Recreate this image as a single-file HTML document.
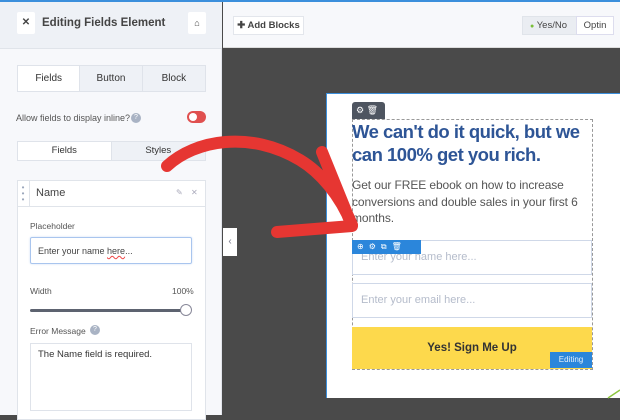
<!DOCTYPE html>
<html><head><meta charset="utf-8"><style>
*{box-sizing:border-box;margin:0;padding:0}
body{width:620px;height:415px;overflow:hidden;font-family:"Liberation Sans",sans-serif;background:#4a4a4a;position:relative}
.a{position:absolute}
.left{left:0;top:0;width:222px;height:415px;background:#f7f8fb;border-right:1px solid #e2e5ec}
.t{font-size:10px;color:#333}
</style></head><body>
<div class="a" style="left:0;top:0;width:620px;height:2px;background:#3b8fdc;z-index:5"></div>
<div class="a left">
 <div class="a" style="left:0;top:2px;width:222px;height:47px;background:#eef1f6;border-bottom:1px solid #e0e4ea"></div>
 <div class="a" style="left:17px;top:12px;width:18px;height:22px;background:#fff;border-radius:2px;font-size:10px;text-align:center;line-height:22px;color:#444;font-weight:bold">✕</div>
 <div class="a" style="left:42px;top:17px;font-size:11.5px;font-weight:bold;color:#444">Editing Fields Element</div>
 <div class="a" style="left:188px;top:12px;width:18px;height:22px;background:#fff;border-radius:2px;font-size:9px;text-align:center;line-height:22px;color:#444">⌂</div>
 <div class="a" style="left:17px;top:65px;width:189px;height:27px;border:1px solid #dfe3ea;background:#eef1f6;display:flex;font-size:10px;color:#333">
  <div style="width:63px;background:#fff;text-align:center;line-height:25px;border-right:1px solid #dfe3ea">Fields</div>
  <div style="width:63px;text-align:center;line-height:25px;border-right:1px solid #dfe3ea">Button</div>
  <div style="width:63px;text-align:center;line-height:25px">Block</div></div>
 <div class="a t" style="left:16px;top:113px;font-size:9px;color:#555">Allow fields to display inline?</div>
 <div class="a" style="left:131px;top:113px;width:10px;height:10px;border-radius:50%;background:#a9b3c4;color:#fff;font-size:7px;text-align:center;line-height:10px">?</div>
 <div class="a" style="left:187px;top:111px;width:19px;height:12px;border-radius:6px;background:#e0504f"><div style="position:absolute;left:2px;top:2px;width:8px;height:8px;border-radius:50%;background:#fff"></div></div>
 <div class="a" style="left:17px;top:141px;width:189px;height:20px;border:1px solid #dfe3ea;background:#eef1f6;display:flex;font-size:9.5px;color:#333">
  <div style="width:94px;background:#fff;text-align:center;line-height:18px;border-right:1px solid #dfe3ea">Fields</div>
  <div style="width:94px;text-align:center;line-height:18px">Styles</div></div>
 <div class="a" style="left:17px;top:180px;width:189px;height:240px;background:#fff;border:1px solid #e0e4ea"></div>
 <div class="a" style="left:17px;top:180px;width:13px;height:27px;border-right:1px solid #e0e4ea;color:#9aa6bb;font-size:8px;line-height:6px;text-align:center;padding-top:5px">•<br>•<br>•</div>
 <div class="a" style="left:17px;top:206px;width:189px;height:1px;background:#e0e4ea"></div>
 <div class="a" style="left:36px;top:187px;font-size:11px;color:#444">Name</div>
 <div class="a" style="left:176px;top:188px;font-size:8px;color:#aab">✎</div>
 <div class="a" style="left:191px;top:188px;font-size:8px;color:#aab">✕</div>
 <div class="a" style="left:30px;top:221px;font-size:8.5px;color:#555">Placeholder</div>
 <div class="a" style="left:30px;top:237px;width:162px;height:27px;border:1px solid #a9c5ee;border-radius:2px;box-shadow:0 0 2px #cfe0f7;font-size:9px;color:#444;padding:8px 7px">Enter your name <span style="text-decoration:underline wavy #e44">here</span>...</div>
 <div class="a" style="left:30px;top:286px;font-size:8.5px;color:#555">Width</div>
 <div class="a" style="left:172px;top:286px;font-size:8.5px;color:#555">100%</div>
 <div class="a" style="left:30px;top:309px;width:155px;height:3px;background:#5d6370;border-radius:2px"></div>
 <div class="a" style="left:180px;top:304px;width:12px;height:12px;border-radius:50%;background:#fff;border:1px solid #889"></div>
 <div class="a" style="left:30px;top:326px;font-size:8.5px;color:#555">Error Message</div>
 <div class="a" style="left:90px;top:325px;width:10px;height:10px;border-radius:50%;background:#a9b3c4;color:#fff;font-size:7px;text-align:center;line-height:10px">?</div>
 <div class="a" style="left:30px;top:343px;width:162px;height:68px;border:1px solid #dfe3ea;font-size:9.5px;color:#333;padding:5px 7px">The Name field is required.</div>
</div>
<div class="a" style="left:223px;top:2px;width:397px;height:46px;background:#f7f8fb;border-bottom:1px solid #ddd"></div>
<div class="a" style="left:233px;top:16px;width:71px;height:19px;background:#fff;border:1px solid #e3e6ec;font-size:9.5px;font-weight:bold;color:#444;line-height:17px;text-align:center">✚ Add Blocks</div>
<div class="a" style="left:522px;top:16px;width:92px;height:19px;background:#eaedf2;border:1px solid #e0e4ea;font-size:9.5px;color:#444;line-height:17px"><span style="color:#7bbf3a;font-size:7px;margin-left:7px">●</span> Yes/No<span style="position:absolute;left:53px;top:-1px;width:38px;height:19px;background:#fff;border:1px solid #dde;text-align:center">Optin</span></div>
<div class="a" style="left:223px;top:228px;width:14px;height:28px;background:#fff;color:#778;font-size:10px;text-align:center;line-height:28px">‹</div>
<div class="a" style="left:326px;top:93px;width:294px;height:305px;background:#fff;border-top:1px solid #3b8fdc;border-left:1px solid #3b8fdc"></div>
<div class="a" style="left:352px;top:102px;width:33px;height:17px;background:#4e5560;border-radius:3px 3px 0 0;color:#fff;font-size:9px;line-height:17px;padding-left:4px">⚙ 🗑</div>
<div class="a" style="left:352px;top:119px;width:241px;height:251px;border:1px dashed #999"></div>
<div class="a" style="left:352px;top:120px;width:245px;font-size:18.5px;font-weight:bold;color:#2e5596;line-height:23px;letter-spacing:-0.5px">We can't do it quick, but we can 100% get you rich.</div>
<div class="a" style="left:352px;top:177px;width:245px;font-size:12px;color:#555;line-height:16.5px;letter-spacing:-0.1px">Get our FREE ebook on how to increase conversions and double sales in your first 6 months.</div>
<div class="a" style="left:352px;top:240px;width:240px;height:35px;border:1px solid #cfd8e8"></div>
<div class="a" style="left:361px;top:251px;font-size:11px;color:#b5bccb">Enter your name here...</div>
<div class="a" style="left:352px;top:240px;width:69px;height:14px;background:#2b86db;color:#fff;font-size:8px;line-height:14px;padding-left:5px;letter-spacing:5px">⊕⚙⧉🗑</div>
<div class="a" style="left:352px;top:283px;width:240px;height:35px;border:1px solid #cfd8e8"></div>
<div class="a" style="left:361px;top:294px;font-size:11px;color:#b5bccb">Enter your email here...</div>
<div class="a" style="left:352px;top:327px;width:240px;height:42px;background:#fdd94c;font-size:11.5px;font-weight:bold;color:#333;text-align:center;line-height:42px">Yes! Sign Me Up</div>
<div class="a" style="left:550px;top:352px;width:42px;height:16px;background:#2b86db;color:#e6f0fb;font-size:8px;text-align:center;line-height:16px">Editing</div>
<svg class="a" style="left:0;top:0" width="620" height="415"><path d="M167 166 C195 140 250 130 300 160 C320 172 340 195 352 225 M322 152 L352 226 L277 232" fill="none" stroke="#e63632" stroke-width="12" stroke-linecap="round" stroke-linejoin="round"/><path d="M608 398 L620 390" stroke="#8cc63f" stroke-width="1.5"/></svg>
</body></html>
